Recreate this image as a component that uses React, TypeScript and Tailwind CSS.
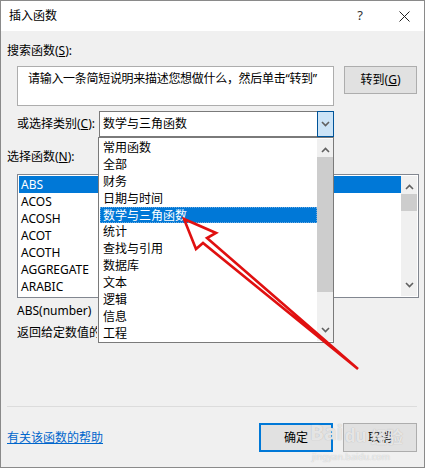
const categories = [
  "常用函数",
  "全部",
  "财务",
  "日期与时间",
  "数学与三角函数",
  "统计",
  "查找与引用",
  "数据库",
  "文本",
  "逻辑",
  "信息",
  "工程",
];

const functions = ["ABS", "ACOS", "ACOSH", "ACOT", "ACOTH", "AGGREGATE", "ARABIC"];

const Chevron = ({ up = false }: { up?: boolean }) => (
  <svg width="9" height="6" viewBox="0 0 9 6" className={up ? "rotate-180" : ""}>
    <path d="M1 1 L4.5 4.5 L8 1" fill="none" stroke="#606060" strokeWidth="1.6" />
  </svg>
);

const ScrollBar = ({ thumbTop, thumbHeight }: { thumbTop: number; thumbHeight: number }) => (
  <div className="relative w-[16px] h-full bg-[#f0f0f0] flex flex-col items-center justify-between py-[8px]">
    <Chevron up />
    <div
      className="absolute left-0 w-[16px] bg-[#cdcdcd]"
      style={{ top: thumbTop, height: thumbHeight }}
    />
    <Chevron />
  </div>
);

const App = () => {
  return (
    <div
      className="relative w-[425px] h-[468px] bg-[#f0f0f0] border border-[#8a8a8a] overflow-hidden text-[12px] text-black"
      style={{ fontFamily: '"Noto Sans", "Noto Sans CJK SC", sans-serif' }}
    >
      {/* title bar */}
      <div className="h-[30px] bg-white flex items-center pl-[8px] pr-[14px]">
        <span className="text-[12px]">插入函数</span>
        <span className="ml-auto mr-[36px] text-[13px] text-[#333]">?</span>
        <svg width="11" height="11" viewBox="0 0 11 11">
          <path d="M0.5 0.5 L10.5 10.5 M10.5 0.5 L0.5 10.5" stroke="#222" strokeWidth="1" />
        </svg>
      </div>

      <div className="px-[6px]">
        <div className="mt-[11px] h-[17px] leading-[17px]">
          搜索函数(<u>S</u>):
        </div>
        <div className="mt-[7px] flex items-start pl-[10px]">
          <div className="w-[317px] h-[40px] bg-white border border-[#adadad] px-[10px] pt-[3px] leading-[18px] tracking-[-0.3px]">
            请输入一条简短说明来描述您想做什么，然后单击“转到”
          </div>
          <div className="ml-[10px] w-[73px] h-[28px] bg-[#e1e1e1] border border-[#adadad] flex items-center justify-center">
            转到(<u>G</u>)
          </div>
        </div>

        <div className="mt-[5px] flex items-center pl-[10px] h-[26px]">
          <span className="w-[82px]">
            或选择类别(<u>C</u>):
          </span>
          <div className="w-[235px] h-[26px] bg-white border border-[#7a7a7a] flex items-center">
            <span className="pl-[3px] flex-1">数学与三角函数</span>
            <div className="w-[17px] h-[26px] -my-px -mr-px bg-[#cce4f7] border border-[#005499] flex items-center justify-center">
              <Chevron />
            </div>
          </div>
        </div>

        <div className="mt-[11px] h-[17px] leading-[17px]">
          选择函数(<u>N</u>):
        </div>
        <div className="mt-[9px] ml-[10px] w-[402px] h-[124px] bg-white border border-[#828790] flex p-px">
          <div className="flex-1">
            {functions.map((f, i) => (
              <div
                key={f}
                className={
                  i === 0
                    ? "h-[17px] leading-[17px] pl-[2px] bg-[#0078d7] text-white"
                    : "h-[17px] leading-[17px] pl-[2px]"
                }
              >
                {f}
              </div>
            ))}
          </div>
          <ScrollBar thumbTop={18} thumbHeight={17} />
        </div>

        <div className="mt-[4px] pl-[10px] h-[18px] leading-[18px]">ABS(number)</div>
        <div className="mt-[4px] ml-[10px] w-[80px] h-[18px] leading-[18px] whitespace-nowrap overflow-hidden">
          返回给定数值的绝对值，即不带符号的数值
        </div>

        <div className="mt-[64px] mr-[1px] h-px bg-[#dcdcdc]" />

        <div className="mt-[16px] flex items-center">
          <span className="text-[#0066cc] underline">有关该函数的帮助</span>
          <div className="ml-auto w-[74px] h-[29px] bg-[#e1e1e1] border-2 border-[#0078d7] flex items-center justify-center">
            确定
          </div>
          <div className="ml-[10px] mr-[1px] w-[74px] h-[29px] bg-[#e1e1e1] border border-[#adadad] flex items-center justify-center">
            取消
          </div>
        </div>
      </div>

      {/* open category dropdown */}
      <div className="absolute left-[97px] top-[136px] w-[236px] h-[206px] bg-white border border-[#7a7a7a] flex pl-px py-px">
        <div className="flex-1">
          {categories.map((c) => (
            <div
              key={c}
              className={
                c === "数学与三角函数"
                  ? "h-[16.9px] leading-[17px] pl-[3px] bg-[#0078d7] text-white outline-1 outline-dotted outline-offset-[-1px] outline-[#6aa9e0]"
                  : "h-[16.9px] leading-[17px] pl-[3px]"
              }
            >
              {c}
            </div>
          ))}
        </div>
        <ScrollBar thumbTop={18} thumbHeight={135} />
      </div>

      {/* watermark */}
      <div className="absolute left-[309px] top-[416px] flex items-end gap-[2px] text-white/70 font-bold text-[21px] [text-shadow:0_0_1px_#a8a8a8] pointer-events-none">
        <span>Bai</span>
        <span className="text-[17px]">du</span>
        <span className="text-[16px] ml-[2px]">经验</span>
      </div>
      <div className="absolute left-[311px] top-[449px] text-[9px] text-white/70 [text-shadow:0_0_1px_#b0b0b0] pointer-events-none">
        jingyan.baidu.com
      </div>

      {/* red arrow */}
      <svg className="absolute left-0 top-0 pointer-events-none" width="425" height="468">
        <path
          d="M183 218 L215 232 L206 237 L357 368 L202 242 L195 248 Z"
          fill="none"
          stroke="#e01010"
          strokeWidth="2.6"
          strokeLinejoin="miter"
        />
      </svg>
    </div>
  );
};

export default App;
